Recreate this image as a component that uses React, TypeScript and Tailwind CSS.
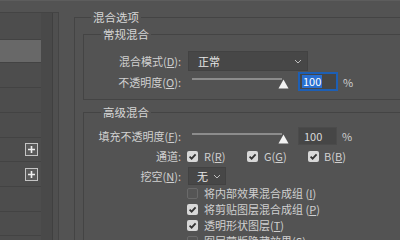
import React from 'react';

function Check({ on }: { on: boolean }) {
  if (!on) {
    return <span className="w-[11px] h-[11px] shrink-0 rounded-[2px] border border-[#6a6a6a] bg-[#555]" />;
  }
  return (
    <span className="w-[11px] h-[11px] shrink-0 rounded-[2px] bg-[#d8d8d8] flex items-center justify-center">
      <svg width="9" height="9" viewBox="0 0 9 9">
        <path d="M1.6 4.6 L3.6 6.6 L7.6 2.3" fill="none" stroke="#333" strokeWidth="1.8" />
      </svg>
    </span>
  );
}

function Chevron() {
  return (
    <svg width="8" height="5" viewBox="0 0 8 5" className="shrink-0">
      <path d="M1 1 L4 4 L7 1" fill="none" stroke="#bdbdbd" strokeWidth="1" />
    </svg>
  );
}

function Slider() {
  return (
    <div className="relative w-[101px] h-full shrink-0">
      <div className="absolute left-[5px] top-[6px] w-[90px] h-[2px] bg-[#8c8c8c]" />
      <svg className="absolute left-[91px] top-[7px]" width="11" height="10" viewBox="0 0 11 10">
        <path d="M5.5 0.5 L10.5 9.5 L0.5 9.5 Z" fill="#f2f2f2" />
      </svg>
    </div>
  );
}

function Label({ children }: { children: React.ReactNode }) {
  return <div className="w-[98px] shrink-0 text-right pr-[1px] whitespace-nowrap">{children}</div>;
}

const rows = [27, 23, 25, 25, 25, 24, 25, 25, 24, 25];

export default function App() {
  return (
    <div className="w-[400px] h-[240px] overflow-hidden bg-[#535353] border-t border-[#5d5d5d] flex font-['Noto_Sans_CJK_SC',sans-serif] text-[11px] leading-[16px] text-[#d0d0d0]">
      {/* layers list, scrolled */}
      <div className="w-[59px] shrink-0 mt-[11px] border-t border-[#444] flex">
        <div className="w-[41px] shrink-0 bg-[#4d4d4d] flex flex-col">
          {rows.map((h, i) => (
            <div
              key={i}
              style={{ height: h }}
              className={`shrink-0 border-b border-[#434343] flex items-center justify-end pr-[3px] ${i === 1 ? 'bg-[#686868]' : ''}`}
            >
              {(i === 5 || i === 6) && (
                <span className="w-[13px] h-[13px] border border-[#c4c4c4] bg-[#5a5a5a] flex items-center justify-center">
                  <svg width="9" height="9" viewBox="0 0 9 9">
                    <path d="M4.5 1 V8 M1 4.5 H8" stroke="#eee" strokeWidth="1.6" />
                  </svg>
                </span>
              )}
            </div>
          ))}
        </div>
        <div className="w-[12px] shrink-0 bg-[#494949] border-r border-[#404040]" />
        <div className="w-[6px] shrink-0 bg-[#4f4f4f] border-r border-[#454545]" />
      </div>

      {/* blending options */}
      <div className="flex-1 min-w-0">
        <fieldset className="ml-[15px] mt-[8px] w-[380px] border-t border-l border-[#444]">
          <legend className="ml-[16px] px-[2px] text-[11.5px] text-[#d6d6d6]">混合选项</legend>

          <fieldset className="ml-[8px] mt-[1px] border-t border-l border-b border-[#444] pt-[9px] pb-[8px]">
            <legend className="ml-[17px] px-[2px] text-[11.5px] text-[#d6d6d6]">常规混合</legend>
            <div className="flex items-center h-[20px] gap-[5px]">
              <Label>
                混合模式(<u>D</u>):
              </Label>
              <div className="ml-[1px] w-[120px] h-[20px] bg-[#474747] border border-[#424242] flex items-center pl-[9px] pr-[5px] text-[#e6e6e6]">
                <span className="flex-1">正常</span>
                <Chevron />
              </div>
            </div>
            <div className="flex items-center h-[19px] mt-[1px] gap-[5px]">
              <Label>
                不透明度(<u>O</u>):
              </Label>
              <Slider />
              <div className="ml-[5px] w-[40px] h-[19px] border-2 border-[#1d5fb5] bg-[#464646] flex items-center pl-[2px]">
                <span className="bg-[#2a6fd0] text-white leading-[13px] px-[1px]">100</span>
              </div>
              <span className="text-[#cfcfcf]">%</span>
            </div>
          </fieldset>

          <fieldset className="ml-[8px] mt-[4px] border-t border-l border-[#444] pt-[7px] pb-[20px]">
            <legend className="ml-[17px] px-[2px] text-[11.5px] text-[#d6d6d6]">高级混合</legend>
            <div className="flex flex-col gap-[2px]">
              <div className="flex items-center h-[18px] gap-[5px]">
                <Label>
                  填充不透明度(<u>F</u>):
                </Label>
                <Slider />
                <div className="ml-[5px] w-[39px] h-[18px] bg-[#464646] border border-[#4b4b4b] flex items-center pl-[5px] text-[#d8d8d8]">
                  100
                </div>
                <span className="text-[#cfcfcf]">%</span>
              </div>
              <div className="flex items-center h-[18px] gap-[5px]">
                <Label>通道:</Label>
                <div className="w-[60px] flex items-center gap-[6px]">
                  <Check on />
                  <span>
                    R(<u>R</u>)
                  </span>
                </div>
                <div className="w-[61px] -ml-[5px] flex items-center gap-[6px]">
                  <Check on />
                  <span>
                    G(<u>G</u>)
                  </span>
                </div>
                <div className="-ml-[5px] flex items-center gap-[5px]">
                  <Check on />
                  <span>
                    B(<u>B</u>)
                  </span>
                </div>
              </div>
              <div className="flex items-center h-[18px] gap-[5px]">
                <Label>
                  挖空(<u>N</u>):
                </Label>
                <div className="ml-[1px] w-[38px] h-[18px] bg-[#474747] border border-[#424242] flex items-center pl-[8px] pr-[4px] text-[#e6e6e6]">
                  <span className="flex-1">无</span>
                  <Chevron />
                </div>
              </div>
            </div>
            <div className="flex flex-col pl-[103px]">
              {[
                { on: false, t: '将内部效果混合成组 (', k: 'I', e: ')' },
                { on: true, t: '将剪贴图层混合成组 (', k: 'P', e: ')' },
                { on: true, t: '透明形状图层(', k: 'T', e: ')' },
                { on: false, t: '图层蒙版隐藏效果(', k: 'S', e: ')' },
              ].map((r) => (
                <div key={r.k} className="h-[16px] flex items-center gap-[6px]">
                  <Check on={r.on} />
                  <span className="whitespace-nowrap">
                    {r.t}
                    <u>{r.k}</u>
                    {r.e}
                  </span>
                </div>
              ))}
            </div>
          </fieldset>
        </fieldset>
      </div>
    </div>
  );
}
